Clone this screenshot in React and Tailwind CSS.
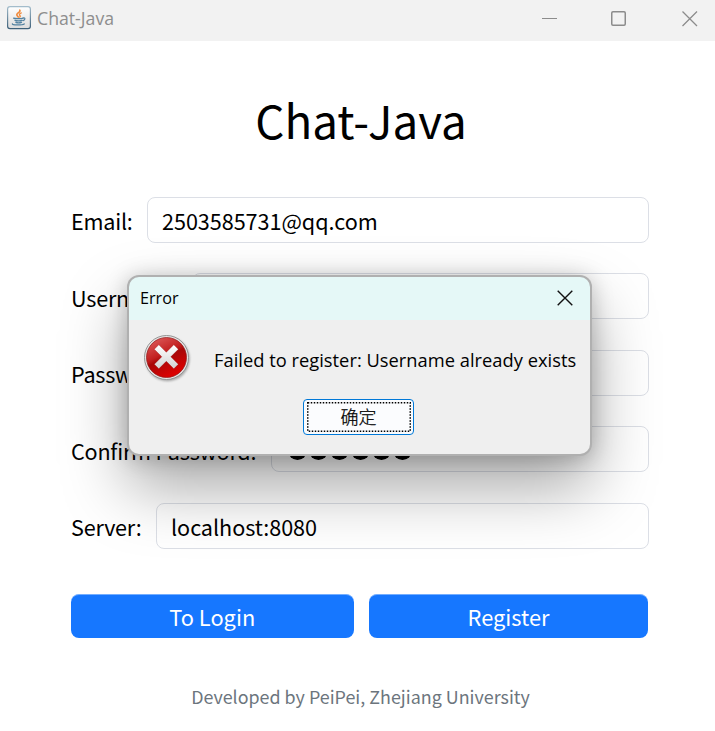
const FORM = "font-['Noto_Sans_CJK_SC',sans-serif]";
const UI = "font-['Open_Sans','Noto_Sans_CJK_SC',sans-serif]";

function JavaIcon() {
  return (
    <svg width="24" height="24" viewBox="0 0 24 24" className="shrink-0">
      <defs>
        <linearGradient id="jb" x1="0" y1="0" x2="0" y2="1">
          <stop offset="0" stopColor="#a3bccb" />
          <stop offset="1" stopColor="#3d6079" />
        </linearGradient>
        <linearGradient id="jf" x1="0" y1="0" x2="0" y2="1">
          <stop offset="0" stopColor="#ffffff" />
          <stop offset="1" stopColor="#dcdcdc" />
        </linearGradient>
      </defs>
      <rect x="0.6" y="0.6" width="22.8" height="22" rx="2.4" fill="url(#jf)" stroke="url(#jb)" strokeWidth="1.2" />
      <g fill="none" strokeLinecap="round">
        <path d="M12.8 4.2c1.4 2-4.2 3-2.8 5.2.4.7 1 1.1 1.3 1.7" stroke="#f08a3c" strokeWidth="1.6" />
        <path d="M14.3 6.9c-2.6 1-2 2-1.2 2.8.4.5.1 1-.4 1.4" stroke="#f08a3c" strokeWidth="1.3" />
        <path d="M6.6 12.2c1.500.7 7.900.7 9.500-.1" stroke="#5382a1" strokeWidth="1.3" />
        <path d="M16.3 12c2-.7 2.3 1.8-.2 2.6" stroke="#5382a1" strokeWidth="1.2" />
        <path d="M8 14.3c1.500.7 5.500.7 7.200 0M8.9 16.3c1.200.5 4 .5 5.600 0" stroke="#5382a1" strokeWidth="1.3" />
        <path d="M5.500 17.800c-1.500 1.300 9.500 1.600 11.800.1" stroke="#5382a1" strokeWidth="1.2" />
      </g>
    </svg>
  );
}

function ErrorIcon() {
  return (
    <svg width="48" height="50" viewBox="0 0 48 50" className="shrink-0">
      <defs>
        <linearGradient id="er" x1="0.1" y1="0" x2="0.6" y2="1">
          <stop offset="0" stopColor="#e06060" />
          <stop offset="0.45" stopColor="#c21f1f" />
          <stop offset="0.55" stopColor="#a80808" />
          <stop offset="1" stopColor="#e00000" />
        </linearGradient>
        <linearGradient id="ex" x1="0" y1="0" x2="0" y2="1">
          <stop offset="0" stopColor="#ffffff" />
          <stop offset="1" stopColor="#d2d2d2" />
        </linearGradient>
        <filter id="es" x="-20%" y="-20%" width="140%" height="140%">
          <feGaussianBlur stdDeviation="0.9" />
        </filter>
      </defs>
      <circle cx="23.5" cy="25" r="22.2" fill="#777" opacity="0.6" filter="url(#es)" />
      <circle cx="22.5" cy="23.5" r="22" fill="#e6e6e6" stroke="#8c8c8c" strokeWidth="0.9" />
      <circle cx="22.5" cy="23.5" r="20" fill="url(#er)" stroke="#8f1515" strokeWidth="0.7" />
      <path d="M10.3 15.3L14.8 10.8L22.3 18.3L29.8 10.8L34.3 15.3L26.8 22.8L34.3 30.3L29.8 34.8L22.3 27.3L14.8 34.8L10.3 30.3L17.8 22.8Z" fill="url(#ex)" stroke="#8a0000" strokeOpacity="0.35" strokeWidth="0.8" />
    </svg>
  );
}

function Row({ label, labelClass, children }) {
  return (
    <div className="flex h-[46px] items-center">
      <div className={`shrink-0 whitespace-nowrap pt-[3px] text-[21.6px] leading-[32px] tracking-[-0.22px] ${labelClass}`}>{label}</div>
      <div className="flex h-[46px] flex-1 items-center rounded-[8px] border border-[#dcdfe6] bg-white pl-[14px] pt-[3px] text-[21.6px] leading-[32px] tracking-[-0.04px]">
        {children}
      </div>
    </div>
  );
}

export default function App() {
  return (
    <div className={`relative flex h-[731px] w-[715px] flex-col overflow-hidden bg-white text-black ${FORM}`}>
      <header className={`flex h-[41px] shrink-0 items-start bg-[#f2f2f2] ${UI}`}>
        <div className="flex items-center pl-[7px] pt-[6px]">
          <JavaIcon />
          <span className="ml-[6px] whitespace-nowrap text-[17.7px] leading-[24px] text-[#8e8e8e]">Chat-Java</span>
        </div>
        <svg width="160" height="18" viewBox="0 0 160 18" className="ml-auto mr-[17px] mt-[10px]" fill="none" stroke="#8c8c8c">
          <path d="M4 8.5H19" />
          <rect x="73.75" y="1.75" width="13.5" height="13.5" rx="1.2" strokeWidth="1.5" />
          <path d="M144.5 1.5L159 16M159 1.5L144.5 16" strokeWidth="1.3" />
        </svg>
      </header>

      <main className="flex flex-1 flex-col pl-[71px] pr-[66px]">
        <h1 className="mt-[43px] h-[70px] pl-[2px] text-center text-[45.7px] leading-[70px]">Chat-Java</h1>
        <div className="mt-[42.7px] flex flex-col gap-[30.5px]">
          <Row label="Email:" labelClass="w-[76px]">2503585731@qq.com</Row>
          <Row label="Username:" labelClass="w-[121px]" />
          <Row label="Password:" labelClass="w-[115px]" />
          <Row label="Confirm Password:" labelClass="w-[200px]">
            <div className="flex gap-[2px] pl-[2px]">
              {[0, 1, 2, 3, 4, 5].map((i) => (
                <span key={i} className="h-[19px] w-[19px] rounded-full bg-black" />
              ))}
            </div>
          </Row>
          <Row label="Server:" labelClass="w-[85px]">localhost:8080</Row>
        </div>
        <div className="-ml-[0.5px] mr-px mt-[45.3px] flex h-[44px] gap-[15px] text-[21.8px] leading-[32px] text-white">
          <button className="w-[283.5px] rounded-[8px] border-t border-[#74aeff] bg-[#1677ff] pt-[2px]">To Login</button>
          <button className="w-[279px] rounded-[8px] border-t border-[#74aeff] bg-[#1677ff] pt-[2px]">Register</button>
        </div>
        <p className="mt-[44px] pl-[1px] text-center text-[17.9px] leading-[28px] text-[#6c757d]">
          Developed by PeiPei, Zhejiang University
        </p>
      </main>

      <section className={`absolute left-[127px] top-[275px] flex h-[181px] w-[465px] flex-col rounded-[12px] bg-[#b0b0b0] p-[2px] shadow-[0_32px_64px_rgba(0,0,0,0.34),0_2px_21px_rgba(0,0,0,0.22)] ${UI}`}>
        <div className="flex h-[43px] items-center justify-between rounded-t-[10px] bg-[#e5f8f7] pl-[11px] pr-[17px]">
          <span className="-mt-[2px] text-[16.2px] leading-[24px]">Error</span>
          <svg width="16" height="16" viewBox="0 0 16 16" stroke="#111" strokeWidth="1.4" className="-mt-[2px]">
            <path d="M0.7 0.7L15.3 15.3M15.3 0.7L0.7 15.3" />
          </svg>
        </div>
        <div className="flex flex-1 flex-col rounded-b-[10px] bg-[#efefef]">
          <div className="flex h-[79px] items-start pl-[15px] pt-[14px]">
            <ErrorIcon />
            <span className="ml-[22px] mt-[12px] whitespace-nowrap text-[18.3px] leading-[28px] tracking-[0.02px]">
              Failed to register: Username already exists
            </span>
          </div>
          <button className="relative ml-[174px] h-[36px] w-[111px] rounded-[4px] border border-[#0078d7] bg-[#fbfcfe] text-[18px] font-light leading-[30px] [-webkit-text-stroke:0.25px_black]">
            确定
            <svg className="absolute left-[3px] top-[2px]" width="104" height="30" fill="none" stroke="black">
              <rect x="0.75" y="0.75" width="102.5" height="28.5" strokeWidth="1.5" strokeDasharray="1.5 1.5" />
            </svg>
          </button>
        </div>
      </section>
    </div>
  );
}
